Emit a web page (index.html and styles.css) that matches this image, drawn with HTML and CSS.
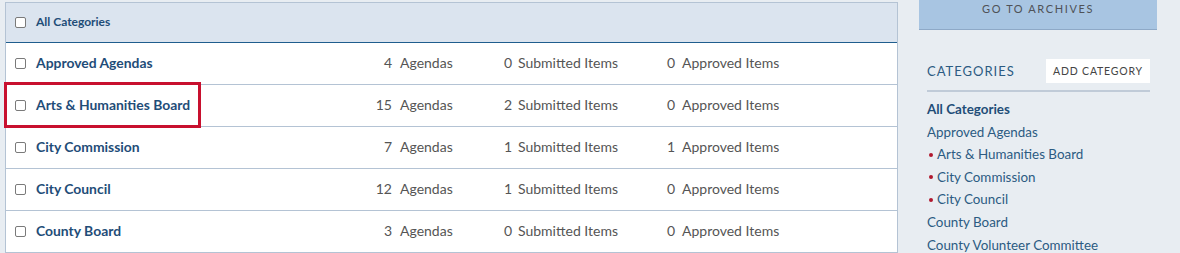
FILE: index.html
```html
<!DOCTYPE html>
<html>
<head>
<meta charset="utf-8">
<link rel="stylesheet" href="styles.css">
</head>
<body>
<div class="page">
  <div class="main">
    <div class="head-row">
      <span class="cb"></span>
      <span class="head-label">All Categories</span>
    </div>
    <div class="row">
      <span class="cb"></span>
      <span class="name">Approved Agendas</span>
      <span class="stat s1"><span class="num">4</span>Agendas</span>
      <span class="stat s2"><span class="num">0</span>Submitted Items</span>
      <span class="stat s3"><span class="num">0</span>Approved Items</span>
    </div>
    <div class="row highlighted">
      <span class="cb"></span>
      <span class="name">Arts &amp; Humanities Board</span>
      <span class="stat s1"><span class="num">15</span>Agendas</span>
      <span class="stat s2"><span class="num">2</span>Submitted Items</span>
      <span class="stat s3"><span class="num">0</span>Approved Items</span>
      <span class="hl-box"></span>
    </div>
    <div class="row">
      <span class="cb"></span>
      <span class="name">City Commission</span>
      <span class="stat s1"><span class="num">7</span>Agendas</span>
      <span class="stat s2"><span class="num">1</span>Submitted Items</span>
      <span class="stat s3"><span class="num">1</span>Approved Items</span>
    </div>
    <div class="row">
      <span class="cb"></span>
      <span class="name">City Council</span>
      <span class="stat s1"><span class="num">12</span>Agendas</span>
      <span class="stat s2"><span class="num">1</span>Submitted Items</span>
      <span class="stat s3"><span class="num">0</span>Approved Items</span>
    </div>
    <div class="row">
      <span class="cb"></span>
      <span class="name">County Board</span>
      <span class="stat s1"><span class="num">3</span>Agendas</span>
      <span class="stat s2"><span class="num">0</span>Submitted Items</span>
      <span class="stat s3"><span class="num">0</span>Approved Items</span>
    </div>
  </div>
  <div class="side">
    <div class="archives">GO TO ARCHIVES</div>
    <div class="cat-head">
      <span class="cat-title">CATEGORIES</span>
      <span class="add-btn">ADD CATEGORY</span>
    </div>
    <ul class="cat-list">
      <li class="active">All Categories</li>
      <li>Approved Agendas</li>
      <li class="dot">Arts &amp; Humanities Board</li>
      <li class="dot">City Commission</li>
      <li class="dot">City Council</li>
      <li>County Board</li>
      <li>County Volunteer Committee</li>
    </ul>
  </div>
</div>
</body>
</html>
```

FILE: styles.css
```css
html, body {
  margin: 0;
  padding: 0;
  background: #e8edf2;
  font-family: "Lato", "Open Sans", sans-serif;
  overflow: hidden;
}
.page {
  display: flex;
  align-items: flex-start;
  height: 253px;
}
.main {
  margin: 2px 0 0 5px;
  width: 891px;
  background: #fff;
  border: 1px solid #b4c3d4;
  border-bottom: none;
  flex: none;
}
.head-row {
  height: 39px;
  background: #dbe4ef;
  border-bottom: 1px solid #1f5d8e;
  display: flex;
  align-items: center;
  padding-left: 9px;
}
.head-label {
  margin-left: 10px;
  font-size: 12px;
  font-weight: 700;
  color: #1f4d78;
  padding-bottom: 2px;
}
.cb {
  width: 9px;
  height: 9px;
  border: 1px solid #7a7a7a;
  border-radius: 2px;
  background: #fff;
  flex: none;
}
.row {
  height: 41px;
  border-bottom: 1px solid #b4c3d4;
  display: flex;
  align-items: center;
  padding-left: 9px;
  position: relative;
}
.row > .name, .row > .stat {
  padding-bottom: 2px;
}
.name {
  margin-left: 10px;
  width: 328px;
  font-size: 13.9px;
  font-weight: 700;
  color: #1f4d78;
  flex: none;
}
.stat {
  display: flex;
  font-size: 14px;
  color: #555;
  flex: none;
}
.num {
  display: inline-block;
  text-align: right;
  margin-right: 8px;
}
.s1 .num { width: 28px; }
.s1 { width: 140px; }
.s2 .num { width: 8px; margin-right: 6px; }
.s2 { width: 163px; }
.s3 .num { width: 8px; margin-right: 7px; }
.hl-box {
  position: absolute;
  left: -2px;
  top: -3px;
  width: 191px;
  height: 40px;
  border: 3px solid #c8102e;
}
.side {
  margin-left: 21px;
  width: 238px;
  flex: none;
}
.archives {
  height: 29px;
  background: #a8c5e2;
  border-bottom: 1px solid #8ea9c7;
  color: #4f5257;
  font-size: 11px;
  letter-spacing: 1.6px;
  text-align: center;
  line-height: 18px;
}
.cat-head {
  margin: 29px 7px 0 8px;
  display: flex;
  justify-content: space-between;
  align-items: center;
  padding-bottom: 7px;
  border-bottom: 2px solid #c0cbd8;
}
.cat-title {
  font-size: 13px;
  letter-spacing: 1px;
  color: #2c5b82;
}
.add-btn {
  background: #fff;
  width: 104px;
  height: 24px;
  line-height: 24px;
  text-align: center;
  font-size: 10.5px;
  letter-spacing: 0.8px;
  color: #444;
}
.cat-list {
  list-style: none;
  margin: 6px 0 0 8px;
  padding: 0;
}
.cat-list li {
  font-size: 13.4px;
  line-height: 22.6px;
  color: #2c5b82;
  white-space: nowrap;
}
.cat-list li.active {
  font-weight: 700;
  color: #1f4d78;
}
.cat-list li.dot::before {
  content: "";
  display: inline-block;
  width: 4px;
  height: 4px;
  border-radius: 50%;
  background: #b0182f;
  margin: 0 4px 2px 2px;
  vertical-align: middle;
}
```
